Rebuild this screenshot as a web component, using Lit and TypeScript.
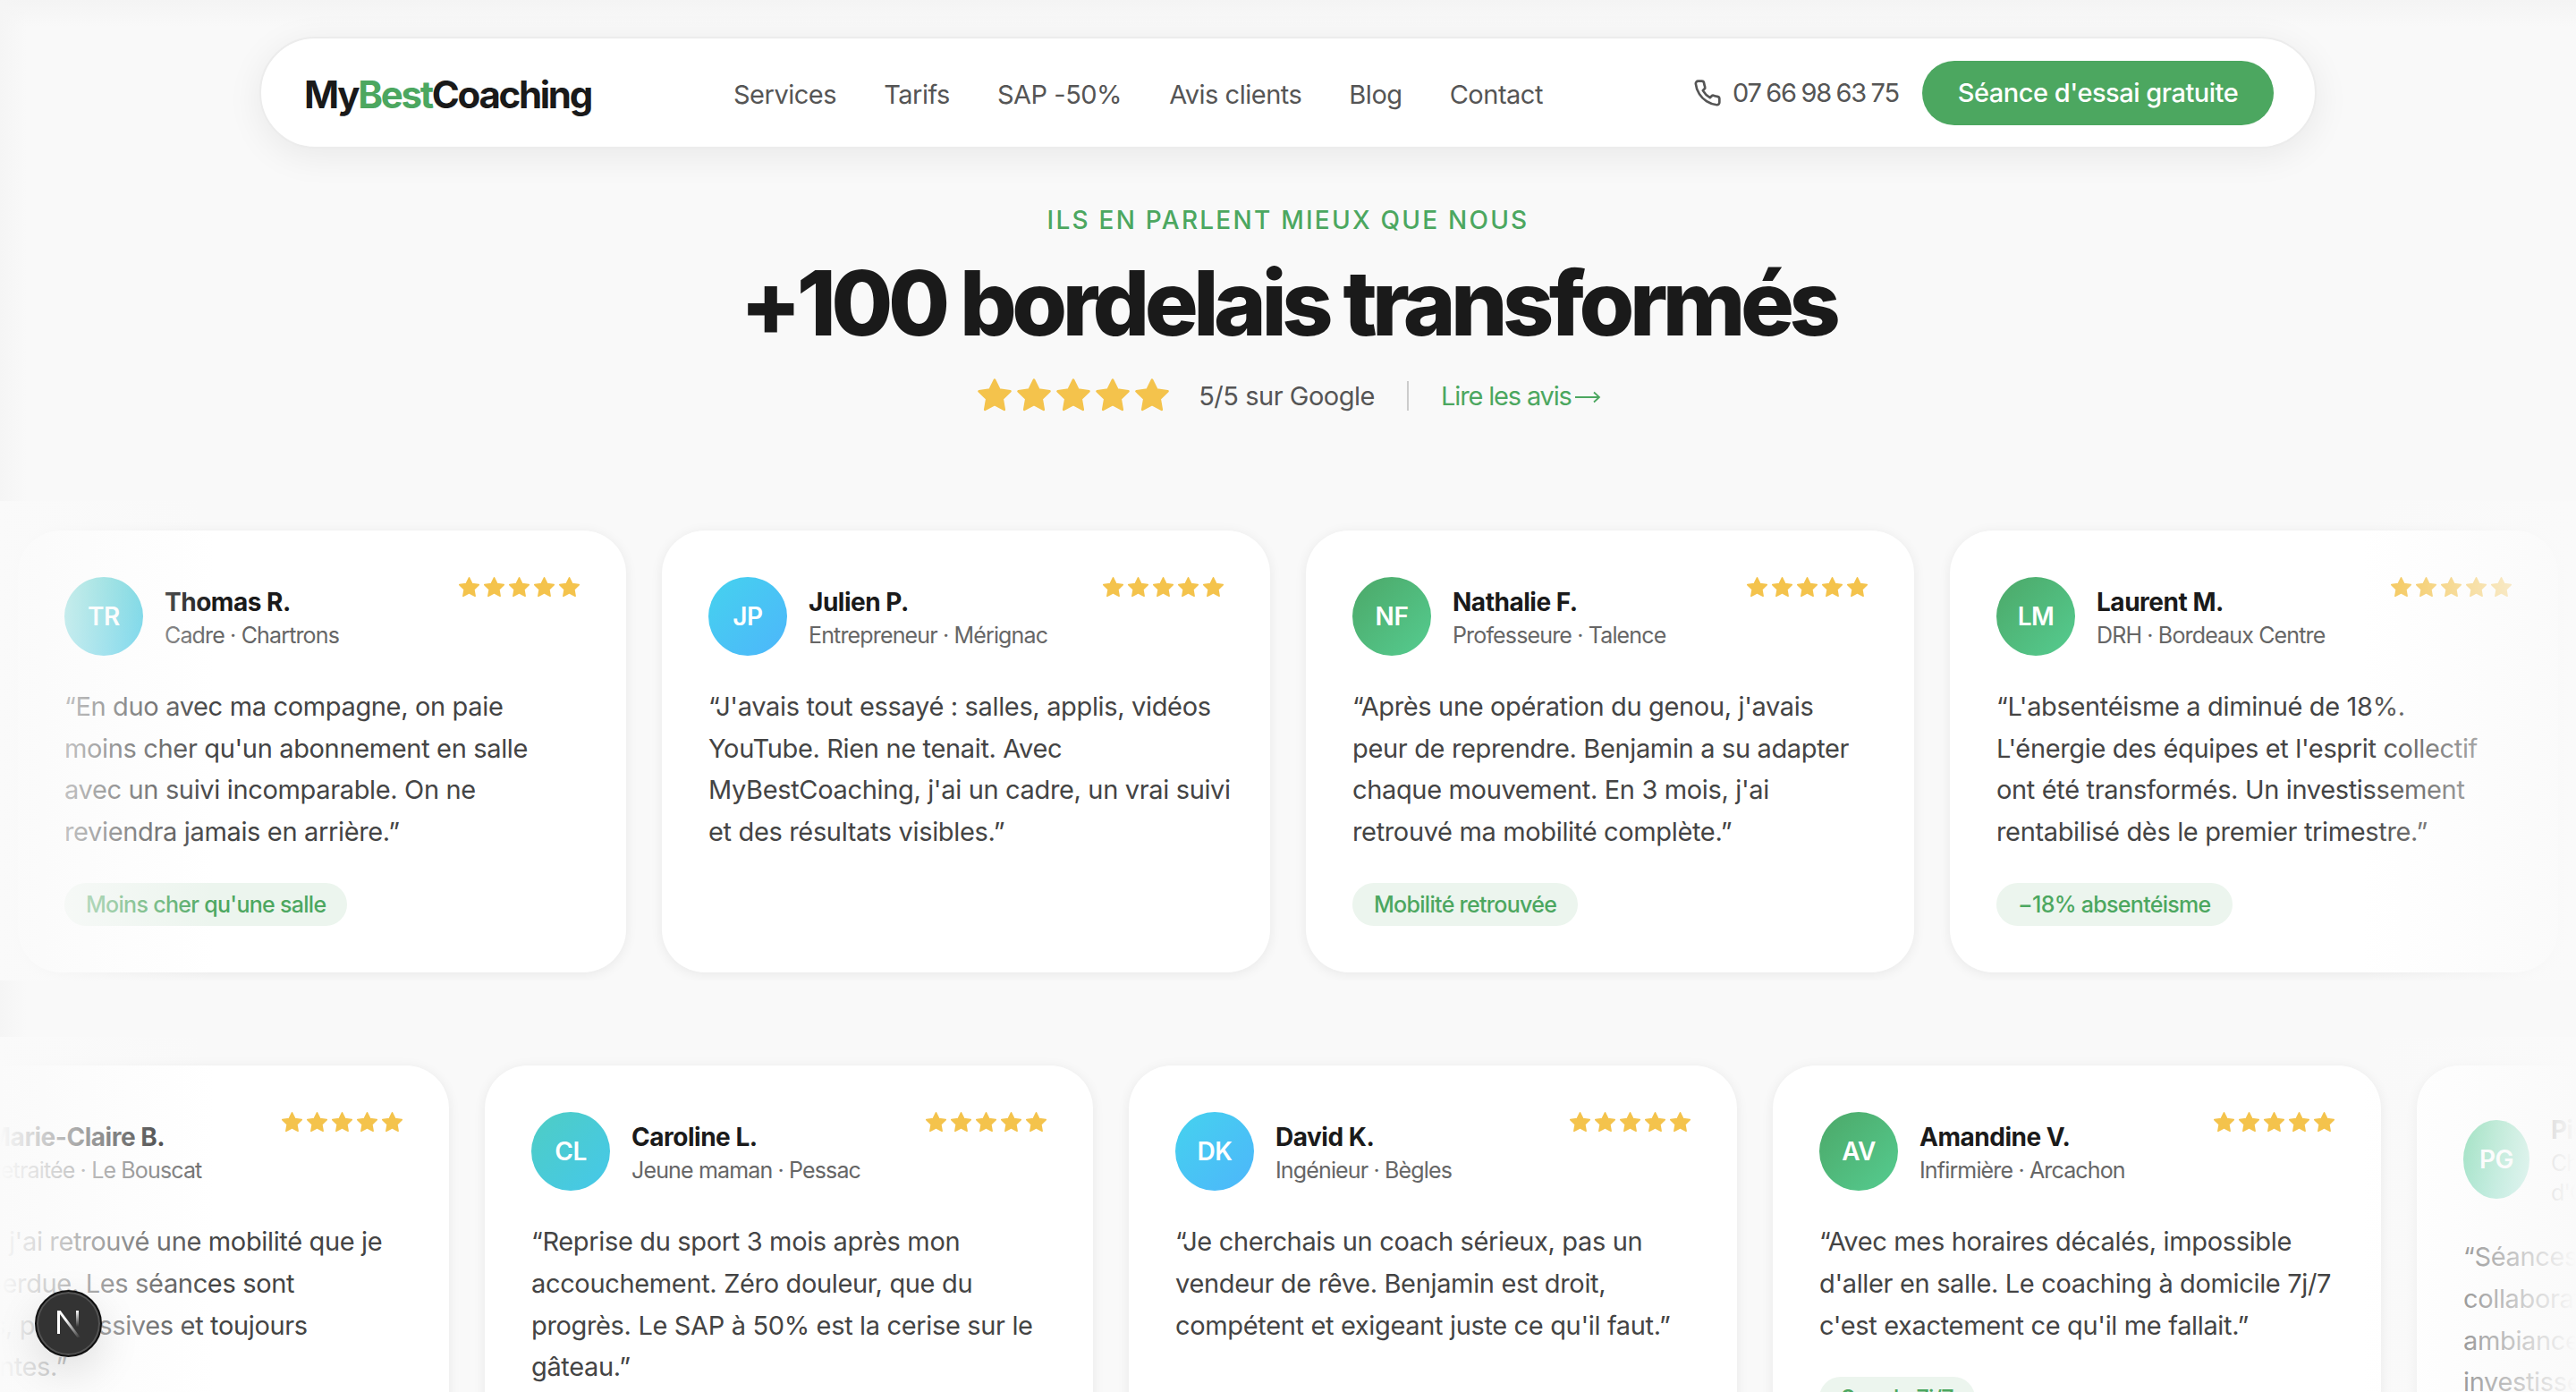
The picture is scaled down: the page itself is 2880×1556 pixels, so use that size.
import { LitElement, html, css, svg } from 'lit';
import { customElement } from 'lit/decorators.js';

type Review = {
  initials: string;
  name: string;
  role: string;
  grad: string;
  quote: string[];
  tag?: string;
};

const TEAL = 'linear-gradient(135deg,#4ecdc4,#45c8ea)';
const BLUE = 'linear-gradient(135deg,#45d2ee,#4db6fb)';
const GREEN = 'linear-gradient(135deg,#4ca868,#55cc90)';
const MINT = 'linear-gradient(135deg,#55cc90,#7fdcc8)';

const rowOne: Review[] = [
  {
    initials: 'TR', name: 'Thomas R.', role: 'Cadre · Chartrons', grad: TEAL,
    quote: ['“En duo avec ma compagne, on paie', "moins cher qu'un abonnement en salle", 'avec un suivi incomparable. On ne', 'reviendra jamais en arrière.”'],
    tag: "Moins cher qu'une salle",
  },
  {
    initials: 'JP', name: 'Julien P.', role: 'Entrepreneur · Mérignac', grad: BLUE,
    quote: ["“J'avais tout essayé : salles, applis, vidéos", 'YouTube. Rien ne tenait. Avec', "MyBestCoaching, j'ai un cadre, un vrai suivi", 'et des résultats visibles.”'],
  },
  {
    initials: 'NF', name: 'Nathalie F.', role: 'Professeure · Talence', grad: GREEN,
    quote: ["“Après une opération du genou, j'avais", 'peur de reprendre. Benjamin a su adapter', "chaque mouvement. En 3 mois, j'ai", 'retrouvé ma mobilité complète.”'],
    tag: 'Mobilité retrouvée',
  },
  {
    initials: 'LM', name: 'Laurent M.', role: 'DRH · Bordeaux Centre', grad: GREEN,
    quote: ["“L'absentéisme a diminué de 18%.", "L'énergie des équipes et l'esprit collectif", 'ont été transformés. Un investissement', 'rentabilisé dès le premier trimestre.”'],
    tag: '−18% absentéisme',
  },
];

const rowTwo: Review[] = [
  {
    initials: 'MB', name: 'Marie-Claire B.', role: 'Retraitée · Le Bouscat', grad: TEAL,
    quote: ["“À 71 ans, j'ai retrouvé une mobilité que je", 'pensais perdue. Les séances sont', 'agréables, progressives et toujours', 'bienveillantes.”'],
  },
  {
    initials: 'CL', name: 'Caroline L.', role: 'Jeune maman · Pessac', grad: TEAL,
    quote: ['“Reprise du sport 3 mois après mon', 'accouchement. Zéro douleur, que du', 'progrès. Le SAP à 50% est la cerise sur le', 'gâteau.”'],
  },
  {
    initials: 'DK', name: 'David K.', role: 'Ingénieur · Bègles', grad: BLUE,
    quote: ['“Je cherchais un coach sérieux, pas un', 'vendeur de rêve. Benjamin est droit,', "compétent et exigeant juste ce qu'il faut.”"],
  },
  {
    initials: 'AV', name: 'Amandine V.', role: 'Infirmière · Arcachon', grad: GREEN,
    quote: ['“Avec mes horaires décalés, impossible', "d'aller en salle. Le coaching à domicile 7j/7", "c'est exactement ce qu'il me fallait.”"],
    tag: 'Souple 7j/7',
  },
  {
    initials: 'PG', name: 'Pierre G.', role: "Chef d'entreprise · Villenave d'Ornon", grad: MINT,
    quote: ['“Séances en entreprise', 'collaborateurs motivés,', 'ambiance au top, un', 'investissement rentable.”'],
  },
];

const nav = ['Services', 'Tarifs', 'SAP -50%', 'Avis clients', 'Blog', 'Contact'];

const star = svg`<path d="M12 2.5l2.95 6 6.6.96-4.78 4.65 1.13 6.57L12 17.58l-5.9 3.1 1.13-6.57L2.45 9.46l6.6-.96L12 2.5z" fill="#f4c34c" stroke="#f4c34c" stroke-width="1.4" stroke-linejoin="round"/>`;

@customElement('app-root')
export class AppRoot extends LitElement {
  static styles = css`
    :host {
      display: block;
      position: relative;
      height: 100vh;
      overflow: hidden;
      font-family: Inter, "Liberation Sans", sans-serif;
      letter-spacing: -0.03em;
      color: #1a1a1a;
      background:
        linear-gradient(90deg, #f5f5f5 0, rgba(249,249,249,0) 30px),
        linear-gradient(180deg, #f4f4f4 0, #f9f9f9 30px);
    }

    /* header */
    .top { padding-top: 41px; }
    .bar {
      box-sizing: border-box;
      width: 2300px;
      height: 125px;
      margin: 0 auto;
      padding: 0 46px 0 48px;
      display: flex;
      align-items: center;
      justify-content: space-between;
      background: #fff;
      border: 2px solid #ececec;
      border-radius: 63px;
      box-shadow: 0 8px 40px rgba(0,0,0,.07);
    }
    .logo { font-size: 42px; font-weight: 700; letter-spacing: -0.055em; width: 319px; margin-top: 4px; white-space: nowrap; }
    .logo span { color: #4ca760; }
    .nav { display: flex; gap: 53px; margin: 4px 7px 0 0; font-size: 29px; color: #555; white-space: nowrap; }
    .contact { display: flex; align-items: center; gap: 26px; }
    .phone { display: flex; align-items: center; gap: 12px; font-size: 29px; letter-spacing: -0.04em; word-spacing: -1.5px; color: #555; white-space: nowrap; }
    .phone svg { width: 32px; height: 32px; }
    .cta {
      width: 393px;
      height: 72px;
      border-radius: 36px;
      display: flex;
      align-items: center;
      justify-content: center;
      background: #4ca760;
      color: #fff;
      font-size: 29px;
      font-weight: 500;
      white-space: nowrap;
    }

    /* hero */
    .hero { height: 394px; display: flex; flex-direction: column; align-items: center; }
    .eyebrow {
      margin-top: 60px;
      line-height: 40px;
      font-size: 28px;
      font-weight: 500;
      letter-spacing: 0.08em;
      color: #4ca760;
    }
    h1 {
      margin: 15px 0 0;
      line-height: 116px;
      font-size: 100px;
      font-weight: 800;
      letter-spacing: -0.055em;
      color: #1a1a1a;
    }
    .rating { margin-top: 23px; display: flex; align-items: center; font-size: 29px; color: #555; }
    .rating .big { display: flex; margin-right: 30px; }
    .rating .big svg { width: 44px; height: 44px; }
    .sep { width: 2px; height: 33px; background: #ccc; margin: 0 36px; }
    .rating a { display: flex; align-items: center; gap: 4px; color: #4ca760; letter-spacing: -0.04em; }
    .rating a svg { width: 29px; height: 14px; margin-top: 3px; }

    /* review rows */
    .row { position: relative; overflow: hidden; display: flex; gap: 40px; }
    .row.one { padding: 33px 0 9px 20px; }
    .row.two { margin-top: 63px; padding: 32px 0 9px; }
    .row.two .card:first-child { margin-left: -178px; }
    .fade { position: absolute; top: 0; bottom: 0; width: 240px; pointer-events: none; }
    .fade.left { left: 0; background: linear-gradient(90deg, #fafafa, rgba(250,250,250,0)); }
    .fade.right { right: 0; background: linear-gradient(270deg, #fafafa, rgba(250,250,250,0)); }

    .card {
      box-sizing: border-box;
      flex: 0 0 680px;
      min-width: 0;
      padding: 52px;
      background: #fff;
      border-radius: 48px;
      box-shadow: 0 2px 14px rgba(0,0,0,.07);
    }
    .head { display: flex; justify-content: space-between; align-items: flex-start; }
    .who { display: flex; align-items: center; gap: 24px; }
    .avatar {
      width: 88px;
      height: 88px;
      border-radius: 50%;
      display: flex;
      align-items: center;
      justify-content: center;
      color: #fff;
      font-size: 28px;
      font-weight: 600;
    }
    .id { transform: translateY(2px); }
    .name { font-size: 28px; font-weight: 700; line-height: 37px; white-space: nowrap; }
    .role { font-size: 25px; line-height: 33px; letter-spacing: -0.034em; color: #666; margin-top: 2px; }
    .stars { display: flex; gap: 1px; flex: none; margin: -2px -2px 0 0; }
    .stars svg { width: 27px; height: 27px; }
    .quote { margin-top: 34px; font-size: 29px; line-height: 46.6px; letter-spacing: -0.012em; color: #444; white-space: nowrap; }
    .quote span { display: block; }
    .tag {
      display: inline-block;
      margin-top: 34px;
      padding: 0 24px;
      line-height: 48px;
      border-radius: 24px;
      background: #ecf5ee;
      color: #4ca760;
      font-size: 25px;
      font-weight: 500;
      letter-spacing: -0.028em;
    }

    /* dev badge */
    .badge {
      position: absolute;
      left: 39px;
      bottom: 39px;
      box-sizing: border-box;
      width: 75px;
      height: 75px;
      border-radius: 50%;
      background: #333;
      border: 2px solid #111;
      box-shadow: inset 0 0 0 2px rgba(255,255,255,.16), 0 16px 48px rgba(0,0,0,.12);
      display: flex;
      align-items: center;
      justify-content: center;
    }
    .badge svg { width: 30px; height: 36px; }
  `;

  renderStars() {
    return html`<div class="stars">${[0, 1, 2, 3, 4].map(() => html`<svg viewBox="0 0 24 24">${star}</svg>`)}</div>`;
  }

  renderCard(r: Review) {
    return html`
      <article class="card">
        <div class="head">
          <div class="who">
            <div class="avatar" style="background:${r.grad}">${r.initials}</div>
            <div class="id">
              <div class="name">${r.name}</div>
              <div class="role">${r.role}</div>
            </div>
          </div>
          ${this.renderStars()}
        </div>
        <div class="quote">${r.quote.map((l) => html`<span>${l}</span>`)}</div>
        ${r.tag ? html`<div class="tag">${r.tag}</div>` : ''}
      </article>
    `;
  }

  render() {
    return html`
      <header class="top">
        <div class="bar">
          <div class="logo">My<span>Best</span>Coaching</div>
          <nav class="nav">${nav.map((n) => html`<span>${n}</span>`)}</nav>
          <div class="contact">
            <div class="phone">
              <svg viewBox="0 0 24 24" fill="none" stroke="#555" stroke-width="2" stroke-linecap="round" stroke-linejoin="round">
                <path d="M22 16.92v3a2 2 0 0 1-2.18 2 19.79 19.79 0 0 1-8.63-3.07 19.5 19.5 0 0 1-6-6 19.79 19.79 0 0 1-3.07-8.67A2 2 0 0 1 4.11 2h3a2 2 0 0 1 2 1.72c.13.96.36 1.9.7 2.81a2 2 0 0 1-.45 2.11L8.09 9.91a16 16 0 0 0 6 6l1.27-1.27a2 2 0 0 1 2.11-.45c.91.34 1.85.57 2.81.7A2 2 0 0 1 22 16.92z"/>
              </svg>
              07 66 98 63 75
            </div>
            <div class="cta">Séance d'essai gratuite</div>
          </div>
        </div>
      </header>

      <section class="hero">
        <div class="eyebrow">ILS EN PARLENT MIEUX QUE NOUS</div>
        <h1>+100 bordelais transformés</h1>
        <div class="rating">
          <div class="big">${[0, 1, 2, 3, 4].map(() => html`<svg viewBox="0 0 24 24">${star}</svg>`)}</div>
          <span>5/5 sur Google</span>
          <i class="sep"></i>
          <a>Lire les avis
            <svg viewBox="0 0 29 14" fill="none" stroke="#4ca760" stroke-width="1.8"><path d="M0 7h27M21 1.5L27 7l-6 5.5"/></svg>
          </a>
        </div>
      </section>

      <section class="row one">
        ${rowOne.map((r) => this.renderCard(r))}
        <div class="fade left"></div>
        <div class="fade right"></div>
      </section>
      <section class="row two">
        ${rowTwo.map((r) => this.renderCard(r))}
        <div class="fade left"></div>
        <div class="fade right"></div>
      </section>

      <div class="badge">
        <svg viewBox="0 0 30 36">
          <defs>
            <linearGradient id="nd" x1="0" y1="0" x2="1" y2="1">
              <stop offset="0.35" stop-color="#fff"/>
              <stop offset="1" stop-color="#fff" stop-opacity="0"/>
            </linearGradient>
            <linearGradient id="nr" x1="0" y1="0" x2="0" y2="1">
              <stop offset="0" stop-color="#fff"/>
              <stop offset="0.7" stop-color="#fff" stop-opacity="0"/>
            </linearGradient>
          </defs>
          <path d="M2 3h3v26H2z" fill="#fff"/>
          <path d="M23 3h3v26h-3z" fill="url(#nr)"/>
          <path d="M2 3h3.6L28 33h-3.6z" fill="url(#nd)"/>
        </svg>
      </div>
    `;
  }
}
